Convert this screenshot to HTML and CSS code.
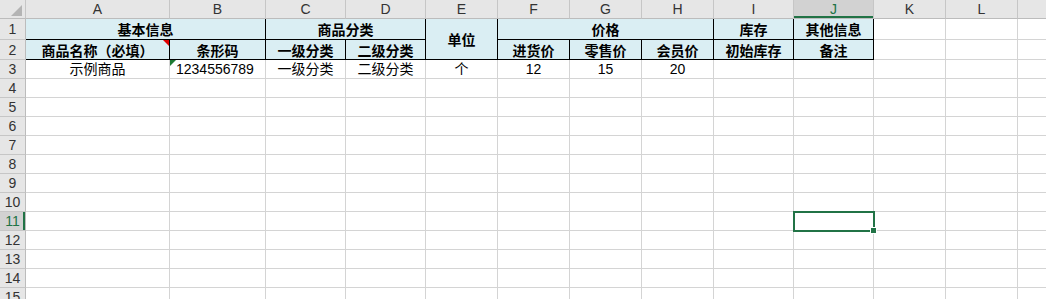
FILE: index.html
```html
<!DOCTYPE html>
<html lang="zh-CN">
<head>
  <meta charset="UTF-8">
  <title>商品导入模板</title>
  <link rel="stylesheet" href="styles.css">
</head>
<body>
  <table class="sheet">
    <colgroup>
      <col class="w-rh">
      <col class="w-144"><col class="w-96"><col class="w-80"><col class="w-80">
      <col class="w-72"><col class="w-72"><col class="w-72"><col class="w-72">
      <col class="w-80"><col class="w-80"><col class="w-72"><col class="w-72"><col class="w-72">
    </colgroup>
    <thead>
      <tr class="colhead">
        <th class="corner"><span class="corner-tri"></span></th>
        <th>A</th><th>B</th><th>C</th><th>D</th><th>E</th><th>F</th><th>G</th>
        <th>H</th><th>I</th><th class="cur">J</th><th>K</th><th>L</th><th>M</th>
      </tr>
    </thead>
    <tbody>
      <tr class="r1">
        <th class="rh">1</th>
        <td class="hd" colspan="2">基本信息</td>
        <td class="hd" colspan="2">商品分类</td>
        <td class="hd" rowspan="2">单位</td>
        <td class="hd" colspan="3">价格</td>
        <td class="hd">库存</td>
        <td class="hd">其他信息</td>
        <td></td><td></td><td></td>
      </tr>
      <tr class="r2">
        <th class="rh">2</th>
        <td class="hd note">商品名称（必填）</td>
        <td class="hd">条形码</td>
        <td class="hd">一级分类</td>
        <td class="hd">二级分类</td>
        <td class="hd">进货价</td>
        <td class="hd">零售价</td>
        <td class="hd">会员价</td>
        <td class="hd">初始库存</td>
        <td class="hd">备注</td>
        <td></td><td></td><td></td>
      </tr>
      <tr>
        <th class="rh">3</th>
        <td class="c">示例商品</td>
        <td class="l txtnum">1234556789</td>
        <td class="c">一级分类</td>
        <td class="c">二级分类</td>
        <td class="c">个</td>
        <td class="c">12</td>
        <td class="c">15</td>
        <td class="c">20</td>
        <td></td><td></td><td></td><td></td><td></td>
      </tr>
      <tr><th class="rh">4</th><td></td><td></td><td></td><td></td><td></td><td></td><td></td><td></td><td></td><td></td><td></td><td></td><td></td></tr>
      <tr><th class="rh">5</th><td></td><td></td><td></td><td></td><td></td><td></td><td></td><td></td><td></td><td></td><td></td><td></td><td></td></tr>
      <tr><th class="rh">6</th><td></td><td></td><td></td><td></td><td></td><td></td><td></td><td></td><td></td><td></td><td></td><td></td><td></td></tr>
      <tr><th class="rh">7</th><td></td><td></td><td></td><td></td><td></td><td></td><td></td><td></td><td></td><td></td><td></td><td></td><td></td></tr>
      <tr><th class="rh">8</th><td></td><td></td><td></td><td></td><td></td><td></td><td></td><td></td><td></td><td></td><td></td><td></td><td></td></tr>
      <tr><th class="rh">9</th><td></td><td></td><td></td><td></td><td></td><td></td><td></td><td></td><td></td><td></td><td></td><td></td><td></td></tr>
      <tr><th class="rh">10</th><td></td><td></td><td></td><td></td><td></td><td></td><td></td><td></td><td></td><td></td><td></td><td></td><td></td></tr>
      <tr><th class="rh cur">11</th><td></td><td></td><td></td><td></td><td></td><td></td><td></td><td></td><td></td><td class="sel"></td><td></td><td></td><td></td></tr>
      <tr><th class="rh">12</th><td></td><td></td><td></td><td></td><td></td><td></td><td></td><td></td><td></td><td></td><td></td><td></td><td></td></tr>
      <tr><th class="rh">13</th><td></td><td></td><td></td><td></td><td></td><td></td><td></td><td></td><td></td><td></td><td></td><td></td><td></td></tr>
      <tr><th class="rh">14</th><td></td><td></td><td></td><td></td><td></td><td></td><td></td><td></td><td></td><td></td><td></td><td></td><td></td></tr>
      <tr><th class="rh">15</th><td></td><td></td><td></td><td></td><td></td><td></td><td></td><td></td><td></td><td></td><td></td><td></td><td></td></tr>
    </tbody>
  </table>
</body>
</html>
```

FILE: styles.css
```css
body {
  margin: 0;
  background: #fff;
  overflow: hidden;
  font-family: "Liberation Sans", "Noto Sans CJK SC", sans-serif;
}
.sheet {
  border-collapse: separate;
  border-spacing: 0;
  table-layout: fixed;
  width: 1090px;
  font-size: 14px;
  color: #000;
}
.w-rh { width: 26px; }
.w-144 { width: 144px; }
.w-96 { width: 96px; }
.w-80 { width: 80px; }
.w-72 { width: 72px; }

.sheet td, .sheet th {
  padding: 0;
  border-right: 1px solid #d4d4d4;
  border-bottom: 1px solid #d4d4d4;
  white-space: nowrap;
  overflow: hidden;
  line-height: 1;
}
.sheet tr { height: 19px; }
.sheet tr.colhead { height: 19px; }
.sheet tr.r1 { height: 21px; }
.sheet tr.r2 { height: 20px; }

/* column letters */
.colhead th {
  background: #e6e6e6;
  color: #333;
  font-weight: normal;
  font-size: 14px;
  border-right-color: #c6c6c6;
  border-bottom-color: #bcbcbc;
}
.colhead th.cur {
  background: #d2d2d2;
  color: #217346;
  box-shadow: inset 0 -2px 0 #217346;
}
.corner {
  position: relative;
}
.corner-tri {
  position: absolute;
  right: 3px;
  bottom: 2px;
  width: 0;
  height: 0;
  border-left: 11px solid transparent;
  border-bottom: 11px solid #b4b4b4;
}

/* row numbers */
.rh {
  background: #e6e6e6;
  color: #333;
  font-weight: normal;
  text-align: center;
  border-right-color: #bcbcbc !important;
  border-bottom-color: #c6c6c6 !important;
}
.rh.cur {
  background: #d2d2d2;
  color: #217346;
  box-shadow: inset -2px 0 0 #217346;
}

/* header block */
.hd {
  background: #daeef3;
  font-family: "Noto Sans CJK SC", sans-serif;
  font-weight: bold;
  font-size: 14px;
  text-align: center;
  border-right: 1px solid #000 !important;
  border-bottom: 1px solid #000 !important;
}
.r1 .hd:first-of-type { border-bottom-color: #000; }

.c {
  text-align: center;
  font-family: "Liberation Sans", "Noto Sans CJK SC", sans-serif;
}
.l {
  text-align: left;
  padding-left: 6px !important;
}

/* comment indicator */
.note, .txtnum { position: relative; }
.note::after {
  content: "";
  position: absolute;
  top: 0;
  right: 0;
  border-top: 6px solid #e00000;
  border-left: 6px solid transparent;
}
.txtnum::before {
  content: "";
  position: absolute;
  top: 0;
  left: 0;
  border-top: 6px solid #1e7b34;
  border-right: 6px solid transparent;
}

/* active cell */
.sel {
  position: relative;
  outline: 2px solid #217346;
  outline-offset: -1px;
  overflow: visible !important;
}
.sel::after {
  content: "";
  position: absolute;
  right: -4px;
  bottom: -4px;
  width: 5px;
  height: 5px;
  background: #217346;
  border: 1px solid #fff;
  z-index: 2;
}
```
